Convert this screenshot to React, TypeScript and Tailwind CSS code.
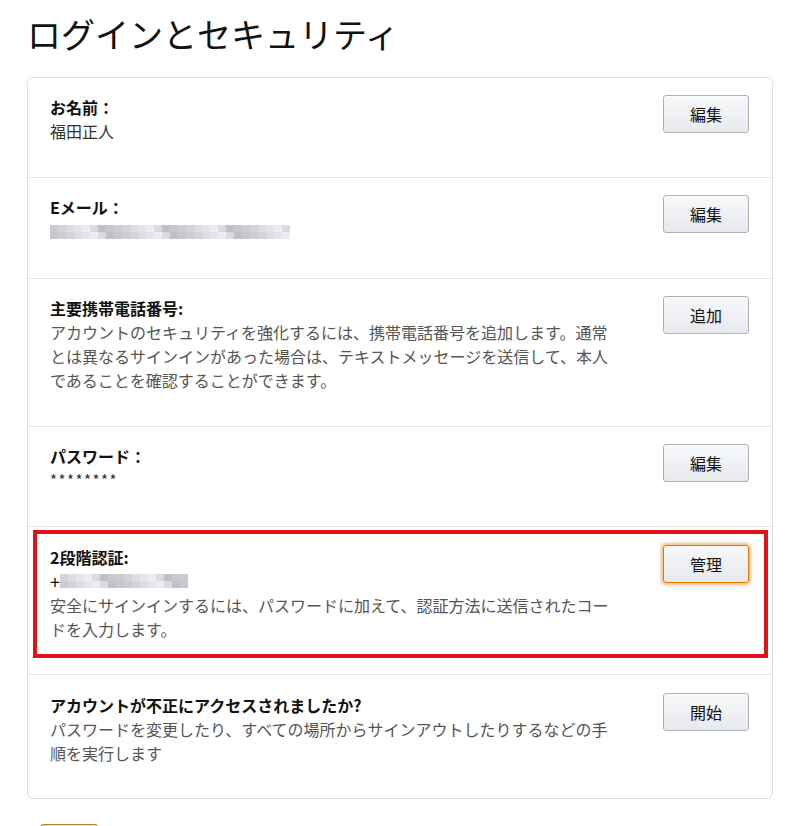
import React from "react";

const shades = [
  "bg-[#d9d7dd]",
  "bg-[#c8c5ce]",
  "bg-[#e4e2e7]",
  "bg-[#bdb9c4]",
  "bg-[#d1cfd6]",
  "bg-[#ebe9ee]",
  "bg-[#c3c0ca]",
  "bg-[#dcdae0]",
];

// Pixelated mosaic used to hide personal data
const Mosaic = ({ cols, seed }: { cols: number; seed: number }) => (
  <span className="inline-flex flex-col align-middle opacity-90">
    {[0, 1].map((r) => (
      <span key={r} className="flex">
        {Array.from({ length: cols }).map((_, i) => (
          <span
            key={i}
            className={`w-[8px] h-[7px] ${shades[(i * 3 + r * 5 + seed) % shades.length]}`}
          />
        ))}
      </span>
    ))}
  </span>
);

const Btn = ({ label, active }: { label: string; active?: boolean }) => (
  <button
    className={
      "w-[86px] h-[38px] shrink-0 rounded-[3px] border bg-gradient-to-b from-[#f7f8fa] to-[#e7e9ec] text-[16px] text-[#111] " +
      (active
        ? "border-[#e77600] shadow-[0_0_3px_2px_rgba(228,121,17,0.5)]"
        : "border-[#adb1b8] shadow-[0_1px_0_rgba(255,255,255,0.6)_inset]")
    }
  >
    {label}
  </button>
);

const Row = ({
  label,
  children,
  button,
}: {
  label: string;
  children: React.ReactNode;
  button: string;
}) => (
  <div className="flex justify-between gap-4 border-t border-[#e7e7e7] first:border-t-0 pl-[22px] pr-[23px] pt-[17px] pb-[34px]">
    <div className="leading-[24px]">
      <div className="font-bold text-[#111]">{label}</div>
      {children}
    </div>
    <Btn label={button} />
  </div>
);

export default function App() {
  return (
    <div
      className="w-[800px] h-[826px] overflow-hidden bg-white px-[27px] pt-[13px] text-[16px]"
      style={{ fontFamily: '"Noto Sans CJK JP", "Noto Sans", sans-serif' }}
    >
      <h1 className="text-[34px] leading-[41px] font-normal text-[#111] mb-[23px]">
        ログインとセキュリティ
      </h1>

      <div className="border border-[#dddddd] rounded-[6px] bg-white">
        <Row label="お名前：" button="編集">
          <div className="text-[#333]">福田正人</div>
        </Row>

        <Row label="Eメール：" button="編集">
          <div className="h-[25px] flex items-center">
            <Mosaic cols={30} seed={1} />
          </div>
        </Row>

        <Row label="主要携帯電話番号:" button="追加">
          <div className="text-[#555] w-[570px]">
            アカウントのセキュリティを強化するには、携帯電話番号を追加します。通常とは異なるサインインがあった場合は、テキストメッセージを送信して、本人であることを確認することができます。
          </div>
        </Row>

        <Row label="パスワード：" button="編集">
          <div className="text-[#333] text-[15px] tracking-[1.5px]">********</div>
        </Row>

        {/* highlighted two-step verification row */}
        <div className="border-t border-[#e7e7e7] pt-[3px] pl-[5px] pr-[4px] pb-[16px]">
          <div className="flex justify-between gap-4 border-4 border-[#e3131c] pt-[11px] pb-[13px] pl-[13px] pr-[15px]">
            <div className="leading-[24px]">
              <div className="font-bold text-[#111]">2段階認証:</div>
              <div className="flex items-center h-[24px] text-[#111] text-[18px]">
                +<Mosaic cols={16} seed={4} />
              </div>
              <div className="text-[#555] w-[570px]">
                安全にサインインするには、パスワードに加えて、認証方法に送信されたコードを入力します。
              </div>
            </div>
            <Btn label="管理" active />
          </div>
        </div>

        <div className="flex justify-between gap-4 border-t border-[#e7e7e7] pl-[22px] pr-[23px] pt-[18px] pb-[33px]">
          <div className="leading-[24px]">
            <div className="font-bold text-[#111]">アカウントが不正にアクセスされましたか?</div>
            <div className="text-[#555] w-[570px]">
              パスワードを変更したり、すべての場所からサインアウトしたりするなどの手順を実行します
            </div>
          </div>
          <Btn label="開始" />
        </div>
      </div>

      <button
        aria-label="完了"
        className="mt-[25px] ml-[13px] w-[58px] h-[31px] rounded-[3px] border border-[#a88734] bg-gradient-to-b from-[#f7dfa5] to-[#f0c14b]"
      />
    </div>
  );
}
